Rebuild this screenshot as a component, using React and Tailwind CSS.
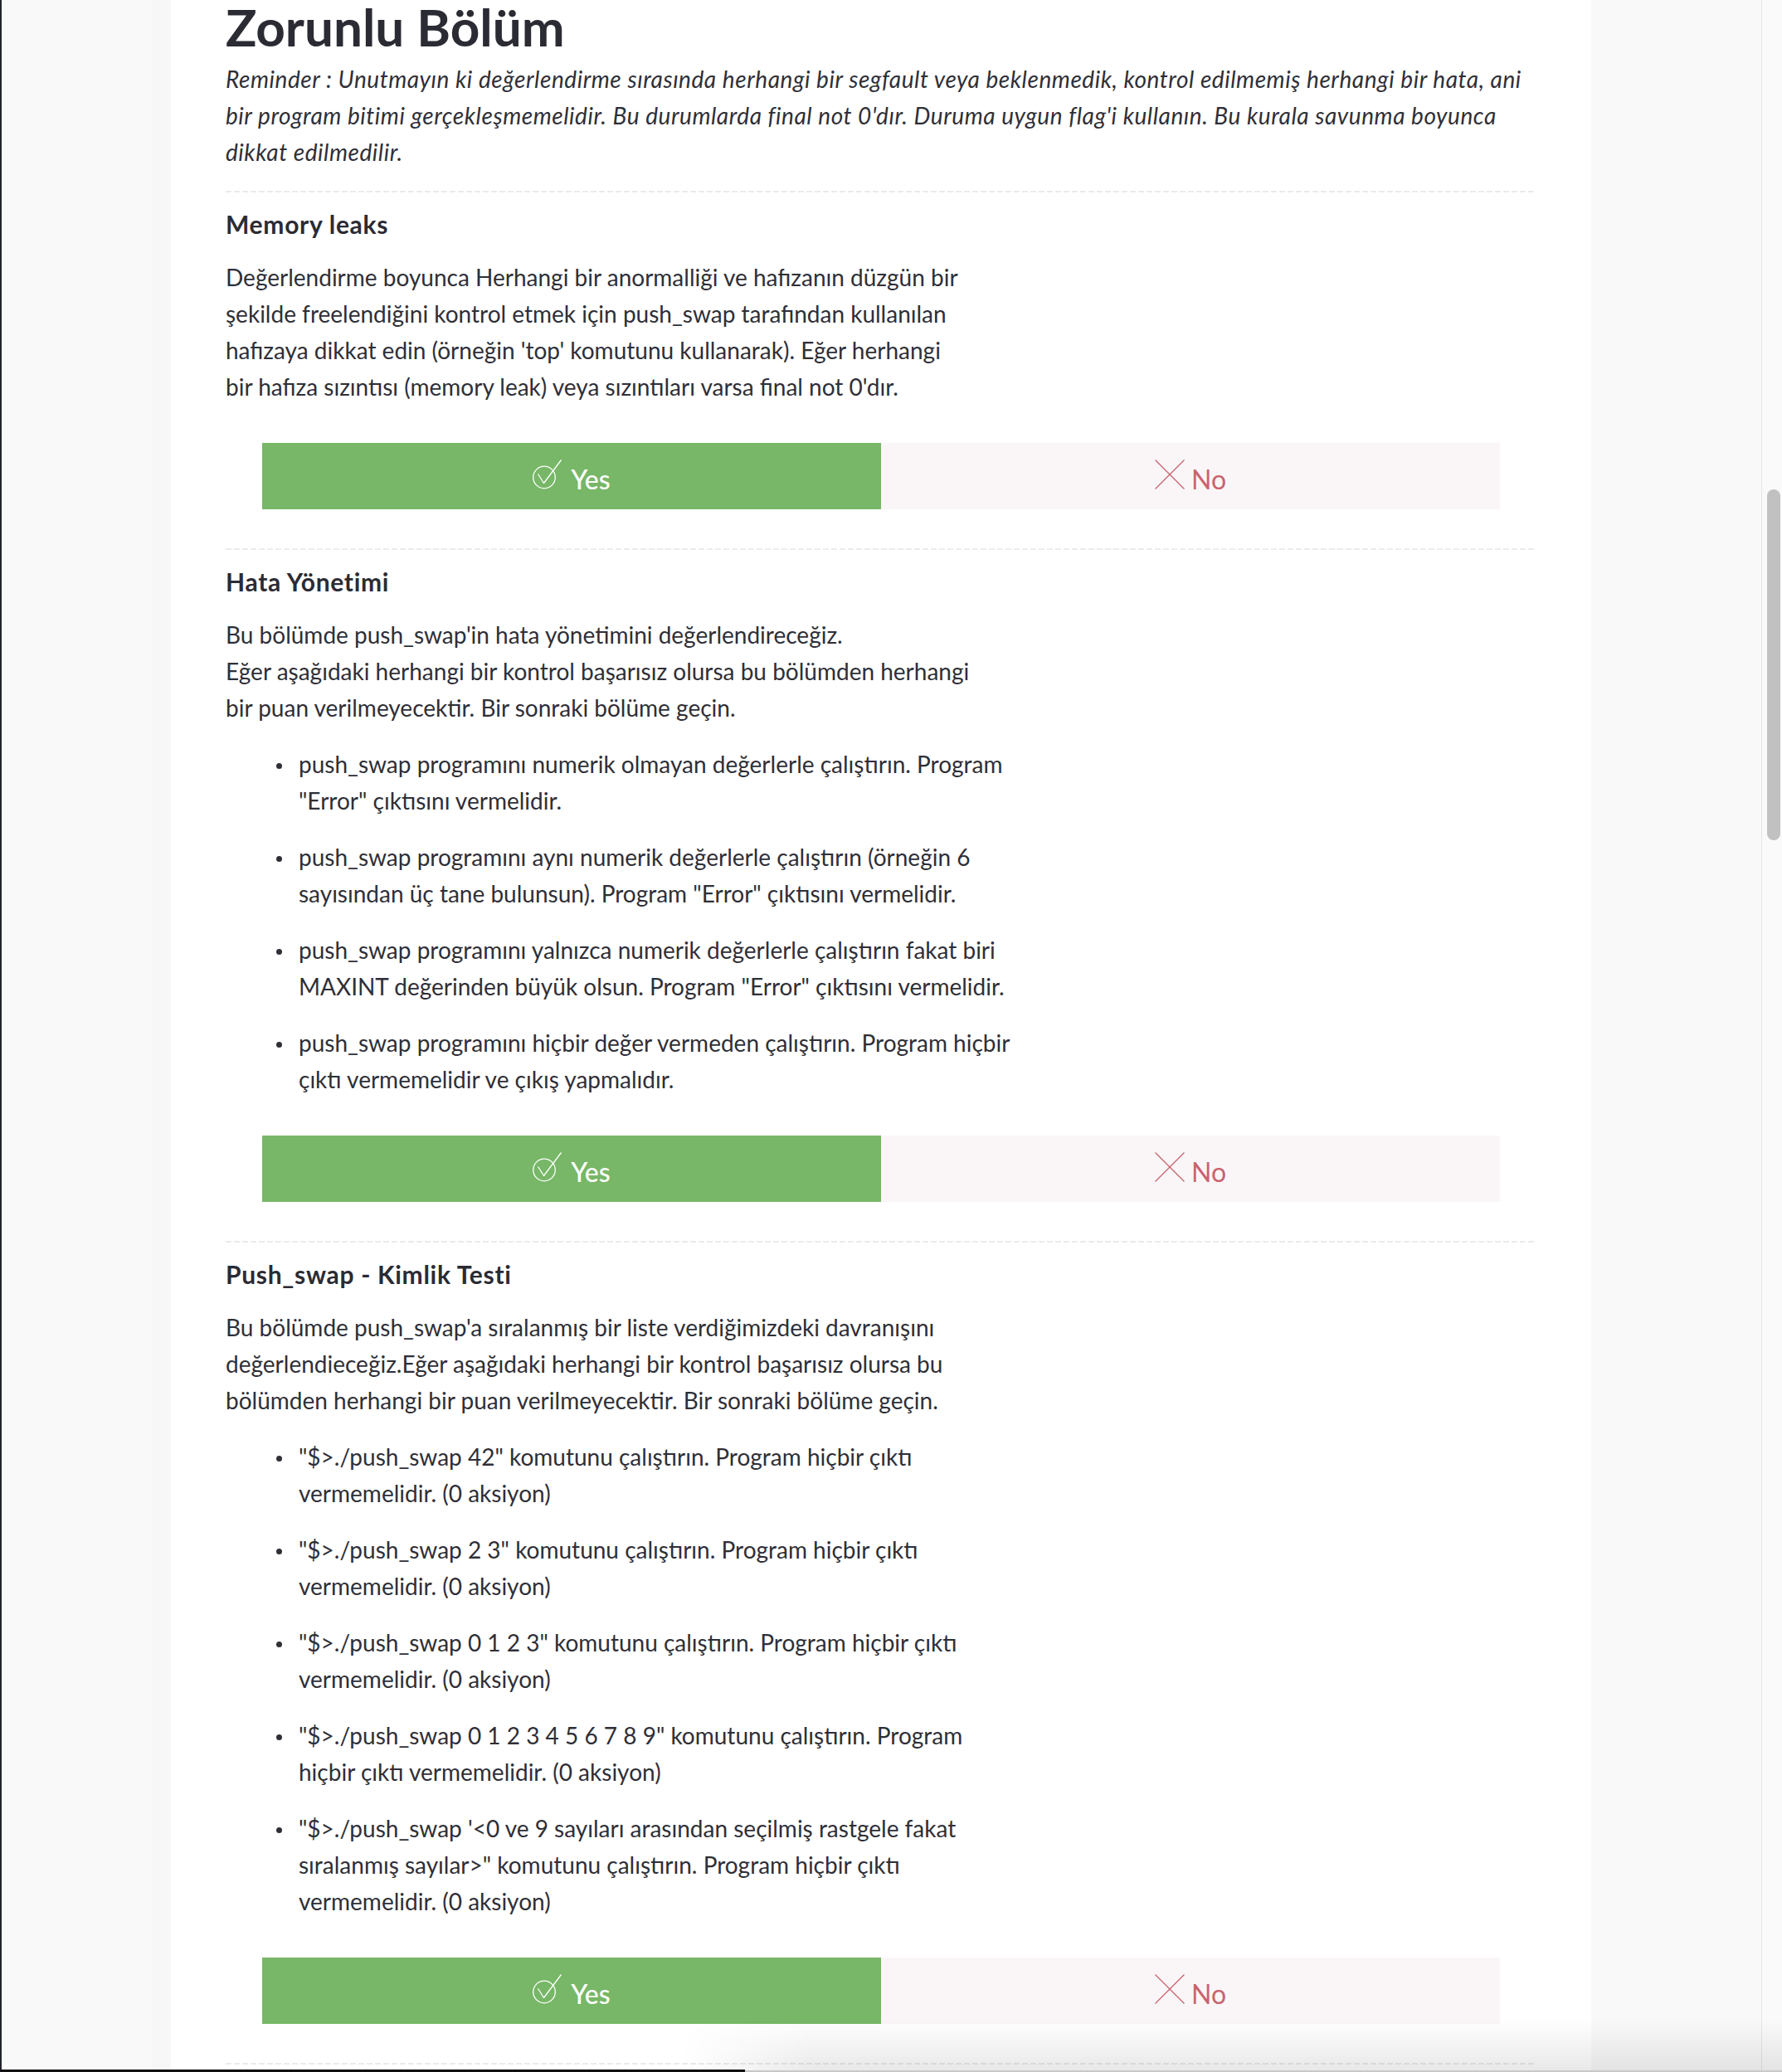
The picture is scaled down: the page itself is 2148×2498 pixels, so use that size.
import React from "react";

const Divider = ({ className = "" }) => (
  <div
    className={
      "h-[2px] w-full bg-[repeating-linear-gradient(to_right,#ebebeb_0px,#ebebeb_7px,transparent_7px,transparent_10px)] " +
      className
    }
  />
);

const Lines = ({ lines }) =>
  lines.map((l, i) => (
    <React.Fragment key={i}>
      {l}
      {i < lines.length - 1 && <br />}
    </React.Fragment>
  ));

const CheckIcon = () => (
  <svg width="36" height="36" viewBox="0 0 36 36" fill="none" stroke="white" strokeWidth="1.3">
    <circle cx="14" cy="21.5" r="13.3" />
    <polyline points="6.5,17.5 13.5,28.5 34.5,0.5" strokeLinejoin="round" />
  </svg>
);

const XIcon = () => (
  <svg width="36" height="36" viewBox="0 0 36 36" fill="none" stroke="#c9636d" strokeWidth="1.3">
    <line x1="0.5" y1="0.5" x2="35.5" y2="35.5" />
    <line x1="35.5" y1="0.5" x2="0.5" y2="35.5" />
  </svg>
);

const Buttons = () => (
  <div className="mx-[44px] mt-[46px] flex h-[80px]">
    <div className="flex flex-1 items-center justify-center bg-[#77b767]">
      <div className="flex items-baseline gap-[10px]">
        <CheckIcon />
        <span className="text-[32px] font-medium leading-none text-white">Yes</span>
      </div>
    </div>
    <div className="flex flex-1 items-center justify-center bg-[#faf6f7]">
      <div className="flex items-baseline gap-[8px]">
        <XIcon />
        <span className="text-[32px] leading-none text-[#c9636d]">No</span>
      </div>
    </div>
  </div>
);

const BulletList = ({ items }) => (
  <ul className="mt-[24px] flex flex-col gap-[24px]">
    {items.map((it, i) => (
      <li key={i} className="flex">
        <div className="flex h-[44px] w-[88px] shrink-0 items-center pl-[61px]">
          <div className="mt-[4px] h-[7px] w-[7px] rounded-full bg-[#2f2f37]" />
        </div>
        <div className="whitespace-nowrap">
          <Lines lines={it} />
        </div>
      </li>
    ))}
  </ul>
);

const Section = ({ title, para, items }) => (
  <section>
    <h2 className="mt-[16px] text-[30px] font-bold leading-[44px] tracking-[0.7px] text-[#2b2b34]">{title}</h2>
    <p className="mt-[20px] whitespace-nowrap">
      <Lines lines={para} />
    </p>
    {items && <BulletList items={items} />}
    <Buttons />
    <Divider className="mt-[47px]" />
  </section>
);

export default function App() {
  return (
    <div className="relative flex h-[2498px] w-[2148px] overflow-hidden bg-[#f9f9f9] font-['Lato',sans-serif]">
      <div className="w-[2px] shrink-0 bg-[#22252d]" />
      <div className="flex w-[204px] shrink-0 justify-end">
        <div className="w-[23px] bg-[#f7f7f7]" />
      </div>
      <main className="w-[1712px] shrink-0 bg-white px-[66px] text-[28px] leading-[44px] text-[#2f2f37]">
        <h1 className="text-[62px] font-bold leading-[64px] text-[#2b2b34]">Zorunlu Bölüm</h1>
        <p className="mt-[9px] whitespace-nowrap italic tracking-[0.55px]">
          <Lines
            lines={[
              "Reminder : Unutmayın ki değerlendirme sırasında herhangi bir segfault veya beklenmedik, kontrol edilmemiş herhangi bir hata, ani",
              "bir program bitimi gerçekleşmemelidir. Bu durumlarda final not 0'dır. Duruma uygun flag'i kullanın. Bu kurala savunma boyunca",
              "dikkat edilmedilir.",
            ]}
          />
        </p>
        <Divider className="mt-[25px]" />
        <Section
          title="Memory leaks"
          para={[
            "Değerlendirme boyunca Herhangi bir anormalliği ve hafızanın düzgün bir",
            "şekilde freelendiğini kontrol etmek için push_swap tarafından kullanılan",
            "hafızaya dikkat edin (örneğin 'top' komutunu kullanarak). Eğer herhangi",
            "bir hafıza sızıntısı (memory leak) veya sızıntıları varsa final not 0'dır.",
          ]}
        />
        <Section
          title="Hata Yönetimi"
          para={[
            "Bu bölümde push_swap'in hata yönetimini değerlendireceğiz.",
            "Eğer aşağıdaki herhangi bir kontrol başarısız olursa bu bölümden herhangi",
            "bir puan verilmeyecektir. Bir sonraki bölüme geçin.",
          ]}
          items={[
            ["push_swap programını numerik olmayan değerlerle çalıştırın. Program", "\"Error\" çıktısını vermelidir."],
            ["push_swap programını aynı numerik değerlerle çalıştırın (örneğin 6", "sayısından üç tane bulunsun). Program \"Error\" çıktısını vermelidir."],
            ["push_swap programını yalnızca numerik değerlerle çalıştırın fakat biri", "MAXINT değerinden büyük olsun. Program \"Error\" çıktısını vermelidir."],
            ["push_swap programını hiçbir değer vermeden çalıştırın. Program hiçbir", "çıktı vermemelidir ve çıkış yapmalıdır."],
          ]}
        />
        <Section
          title="Push_swap - Kimlik Testi"
          para={[
            "Bu bölümde push_swap'a sıralanmış bir liste verdiğimizdeki davranışını",
            "değerlendieceğiz.Eğer aşağıdaki herhangi bir kontrol başarısız olursa bu",
            "bölümden herhangi bir puan verilmeyecektir. Bir sonraki bölüme geçin.",
          ]}
          items={[
            ["\"$>./push_swap 42\" komutunu çalıştırın. Program hiçbir çıktı", "vermemelidir. (0 aksiyon)"],
            ["\"$>./push_swap 2 3\" komutunu çalıştırın. Program hiçbir çıktı", "vermemelidir. (0 aksiyon)"],
            ["\"$>./push_swap 0 1 2 3\" komutunu çalıştırın. Program hiçbir çıktı", "vermemelidir. (0 aksiyon)"],
            ["\"$>./push_swap 0 1 2 3 4 5 6 7 8 9\" komutunu çalıştırın. Program", "hiçbir çıktı vermemelidir. (0 aksiyon)"],
            [
              "\"$>./push_swap '<0 ve 9 sayıları arasından seçilmiş rastgele fakat",
              "sıralanmış sayılar>\" komutunu çalıştırın. Program hiçbir çıktı",
              "vermemelidir. (0 aksiyon)",
            ],
          ]}
        />
      </main>
      <div className="w-[205px] shrink-0" />
      <div className="w-[1px] shrink-0 bg-[#e4e4e4]" />
      <div className="w-[24px] shrink-0 bg-[#fafafa] pl-[6px]">
        <div className="mt-[590px] h-[423px] w-[16px] rounded-full bg-[#c1c1c1]" />
      </div>
      <div className="pointer-events-none absolute bottom-0 left-[820px] right-0 h-[64px] bg-[linear-gradient(to_bottom,rgba(0,0,0,0),rgba(0,0,0,0.09))] [mask-image:linear-gradient(to_right,transparent,black_160px)]" />
      <div className="absolute bottom-0 left-0 h-[3px] w-[898px] bg-[#111]" />
      <div className="absolute bottom-0 left-[898px] right-0 h-[2px] bg-[#c8c8c8]" />
    </div>
  );
}
